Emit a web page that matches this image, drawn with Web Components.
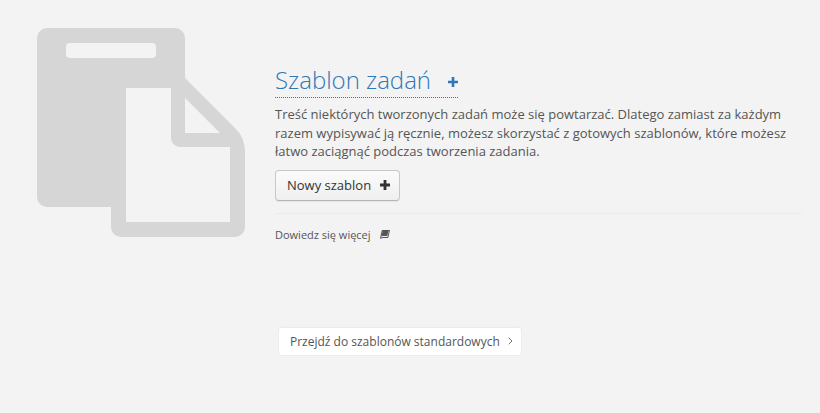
<!DOCTYPE html>
<html lang="pl">
<head>
<meta charset="utf-8">
<title>Szablon zadań</title>
<style>
  html, body { margin: 0; height: 100%; background: #f3f3f3; }
  body { font-family: "Open Sans", sans-serif; color: #555; overflow: hidden; }
</style>
</head>
<body>
<empty-templates>
  <span slot="title">Szablon zadań</span>
  Treść niektórych tworzonych zadań może się powtarzać. Dlatego zamiast za każdym razem wypisywać ją ręcznie, możesz skorzystać z gotowych szablonów, które możesz łatwo zaciągnąć podczas tworzenia zadania.
  <plain-button slot="action" label="Nowy szablon"></plain-button>
  <learn-more slot="more">Dowiedz się więcej</learn-more>
  <standard-link slot="footer">Przejdź do szablonów standardowych</standard-link>
</empty-templates>

<script>
// Big grey "two sheets" picture plus the text column next to it
class EmptyTemplates extends HTMLElement {
  constructor() {
    super();
    this.attachShadow({ mode: 'open' });
  }

  connectedCallback() {
    this.shadowRoot.innerHTML = `
      <style>
        :host { display: block; }
        .top { display: flex; padding: 28px 18px 0 37px; }
        svg { display: block; flex: none; }
        .body { flex: 1; margin-left: 30px; padding-top: 37px; }
        h1 {
          display: inline-flex;
          align-items: center;
          margin: 0;
          padding-bottom: 2px;
          font: 300 24px/30px "Open Sans", sans-serif;
          color: #2f77b8;
          border-bottom: 1px dotted #2f77b8;
        }
        h1 svg { margin: 3px 0 0 17px; }
        p { margin: 7px 0 0; font-size: 13px; line-height: 18.5px; color: #555; }
        .action { margin-top: 9px; }
        hr { height: 1px; margin: 12px 0 0; border: 0; background: #ebebeb; }
        .more { margin-top: 13px; }
        .footer { display: flex; margin: 84px 0 0 278px; }
      </style>
      <div class="top">
        <svg width="208" height="209" viewBox="37 28 208 209">
          <path fill="#d6d6d6" d="M47 28H175a10 10 0 0 1 10 10V78L236 129Q245 138 245 152V227a10 10 0 0 1-10 10H121a10 10 0 0 1-10-10V207H47a10 10 0 0 1-10-10V38a10 10 0 0 1 10-10Z"/>
          <path fill="#f3f3f3" d="M70 43H152a4 4 0 0 1 4 4V54a4 4 0 0 1-4 4H70a4 4 0 0 1-4-4V47a4 4 0 0 1 4-4Z"/>
          <path fill="#f3f3f3" d="M126 88H171V138a9 9 0 0 0 9 9H230V222H126Z"/>
          <path fill="#f3f3f3" d="M185 98V133H220Z"/>
        </svg>
        <div class="body">
          <h1><slot name="title"></slot>
            <svg width="10" height="10" viewBox="0 0 10 10"><path fill="#2f77b8" d="M3.7 0H6.3V3.7H10V6.3H6.3V10H3.7V6.3H0V3.7H3.7Z"/></svg>
          </h1>
          <p><slot></slot></p>
          <div class="action"><slot name="action"></slot></div>
          <hr>
          <div class="more"><slot name="more"></slot></div>
        </div>
      </div>
      <div class="footer"><slot name="footer"></slot></div>
    `;
  }
}

// Grey gradient button with a plus after the label
class PlainButton extends HTMLElement {
  constructor() {
    super();
    this.attachShadow({ mode: 'open' });
  }

  connectedCallback() {
    this.shadowRoot.innerHTML = `
      <style>
        :host { display: inline-block; }
        button {
          display: flex;
          align-items: center;
          box-sizing: border-box;
          width: 125px;
          height: 31px;
          padding: 0 0 0 11px;
          font: 13px "Open Sans", sans-serif;
          color: #333;
          background: linear-gradient(#fbfbfb, #efefef);
          border: 1px solid #c8c8c8;
          border-bottom-color: #b5b5b5;
          border-radius: 4px;
          box-shadow: 0 1px 1px rgba(0,0,0,0.06);
        }
        svg { margin-left: 9px; }
      </style>
      <button type="button">${this.getAttribute('label') || ''}
        <svg width="10" height="10" viewBox="0 0 10 10"><path fill="#333" d="M3.6 0H6.4V3.6H10V6.4H6.4V10H3.6V6.4H0V3.6H3.6Z"/></svg>
      </button>
    `;
  }
}

// Small help link with a book icon
class LearnMore extends HTMLElement {
  constructor() {
    super();
    this.attachShadow({ mode: 'open' });
  }

  connectedCallback() {
    this.shadowRoot.innerHTML = `
      <style>
        :host { display: flex; align-items: center; font-size: 11px; line-height: 16px; color: #555; }
        svg { margin-left: 9px; }
      </style>
      <slot></slot>
      <svg width="10" height="9" viewBox="0 0 10 9"><path fill="#555" d="M2.6 0H9.6Q10 0 9.9 .5L8.4 7.2Q8.2 8 7.4 8H1.8Q1.3 8 1.4 7.5Q1.5 7 2 7H7.4L8.7 1.4 8.2 1H2.8L1.2 7.4Q1 8.6 1.9 9H.9Q0 8.6 .2 7.4L1.6.9Q1.8 0 2.6 0Z"/><path fill="#555" d="M2.7 1H8.4L7.2 6H1.6Z"/></svg>
    `;
  }
}

// White link button to the standard templates
class StandardLink extends HTMLElement {
  constructor() {
    super();
    this.attachShadow({ mode: 'open' });
  }

  connectedCallback() {
    this.shadowRoot.innerHTML = `
      <style>
        :host {
          display: flex;
          align-items: center;
          box-sizing: border-box;
          width: 244px;
          height: 29px;
          padding-left: 11px;
          font-size: 12px;
          color: #555;
          background: #fff;
          border: 1px solid #ececec;
          border-radius: 3px;
        }
        svg { margin-left: 8px; }
      </style>
      <slot></slot>
      <svg width="5" height="8" viewBox="0 0 5 8"><path fill="none" stroke="#777" d="M.7.7 4 4 .7 7.3"/></svg>
    `;
  }
}

customElements.define('empty-templates', EmptyTemplates);
customElements.define('plain-button', PlainButton);
customElements.define('learn-more', LearnMore);
customElements.define('standard-link', StandardLink);
</script>
</body>
</html>
